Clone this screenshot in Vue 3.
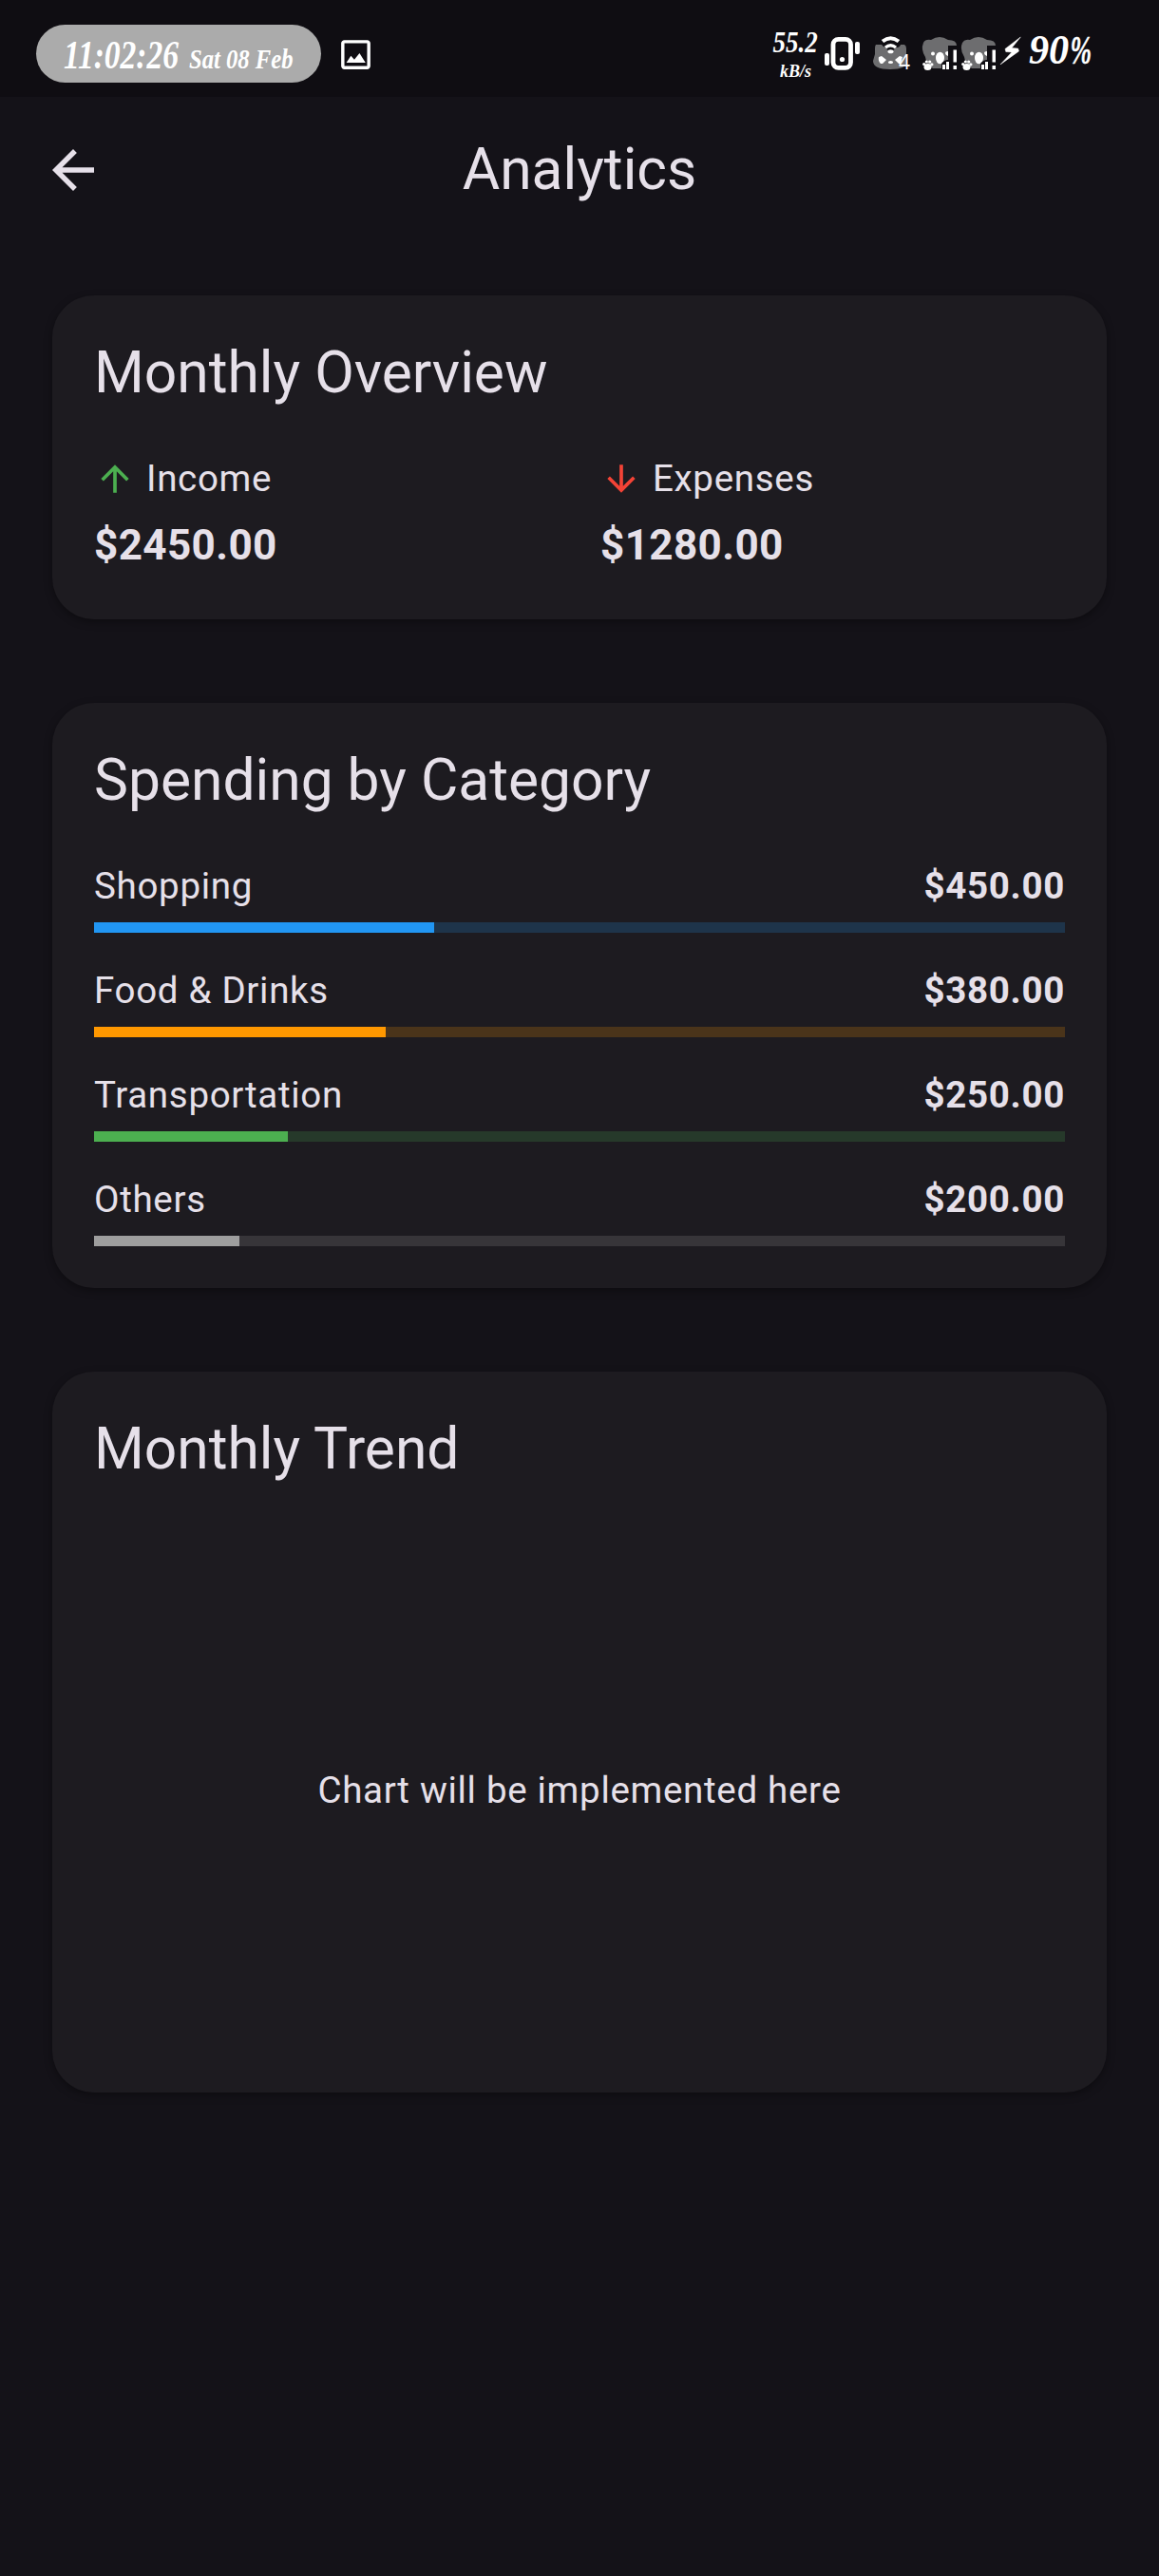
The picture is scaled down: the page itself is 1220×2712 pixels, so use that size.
<script setup>
const totals = [
  { label: 'Income', amount: '$2450.00', color: '#4caf50', icon: 'M4 12l1.41 1.41L11 7.83V20h2V7.83l5.58 5.59L20 12l-8-8-8 8z' },
  { label: 'Expenses', amount: '$1280.00', color: '#f44336', icon: 'M20 12l-1.41-1.41L13 16.17V4h-2v12.17l-5.58-5.59L4 12l8 8 8-8z' },
]

const categories = [
  { name: 'Shopping', amount: '$450.00', share: 35, color: '#2196f3', track: '#1e344a' },
  { name: 'Food & Drinks', amount: '$380.00', share: 30, color: '#ff9800', track: '#4a341a' },
  { name: 'Transportation', amount: '$250.00', share: 20, color: '#4caf50', track: '#26392a' },
  { name: 'Others', amount: '$200.00', share: 15, color: '#9e9e9e', track: '#373539' },
]

const signals = ['sim1', 'sim2']
</script>

<template>
  <div class="screen">
    <header class="status">
      <div class="pill">
        <svg width="300" height="61" viewBox="38 26 300 61">
          <text transform="translate(67 72) scale(.78 1)" font-size="43">11:02:26</text>
          <text transform="translate(199 71.500) scale(.85 1)" font-size="29">Sat 08 Feb</text>
        </svg>
      </div>
      <svg class="photo" width="41" height="41" viewBox="0 0 24 24" fill="#fff">
        <path d="M19 5v14H5V5h14m0-2H5c-1.1 0-2 .9-2 2v14c0 1.1.9 2 2 2h14c1.1 0 2-.9 2-2V5c0-1.1-.9-2-2-2z" />
        <path d="M6.2 17l2.8-4.3 2.1 2.4 3.2-4 3.7 5.9z" />
      </svg>
      <div class="indicators">
        <svg width="56" height="102" viewBox="810 0 56 102">
          <text transform="translate(813.500 55) scale(.87 1)" font-size="31">55.2</text>
          <text transform="translate(821 80.500) scale(.95 1)" font-size="19">kB/s</text>
        </svg>
        <svg width="50" height="102" viewBox="866 0 50 102" fill="#fff">
          <rect x="877" y="41.300" width="18.500" height="30" rx="5.500" fill="none" stroke="#fff" stroke-width="4.800" />
          <circle cx="886.500" cy="62.500" r="2.600" />
          <rect x="868" y="56" width="5" height="13" rx="2" />
          <rect x="900" y="44" width="5" height="13" rx="2" />
        </svg>
        <svg width="53" height="102" viewBox="916 0 53 102" fill="#fff">
          <path d="M922 47h6q2 3 5 3h11q3 0 4-3h4q2 1 2 4v6l1 7q0 9-18 9t-18-9l2-7v-6q0-3 1-4z" fill="#6d6d6f" />
          <g fill="none" stroke="#0f0d12" stroke-width="7">
            <path d="M930 45q7.500-6 15 0M933 51q4.500-4 9 0" />
          </g>
          <path d="M929 43.500q8.500-6.500 17 0" fill="none" stroke="#fff" stroke-width="4" />
          <path d="M932 50q5.500-4.500 11 0" fill="none" stroke="#fff" stroke-width="3.400" />
          <ellipse cx="937.500" cy="54.300" rx="3" ry="2" />
          <path d="M925 60l3-1 5 4-4 4h-2q-3-3-2-7zM950 60l-3-1-5 4 4 4h2z" />
          <ellipse cx="937.500" cy="65.500" rx="2.600" ry="1.600" />
          <text class="badge" x="946" y="72.500" font-size="21">4</text>
        </svg>
        <svg v-for="s in signals" :key="s" width="41" height="102" viewBox="969 0 41 102" fill="#fff">
          <path d="M972 45q2-4 8-3q9-6 18 0q9 0 9 6h-9v24h-16q-7-4-8-12q-5-8-2-15z" fill="#6d6d6f" />
          <circle cx="982" cy="56.500" r="2" />
          <path d="M998 54v5q-3-1-3-3t3-2z" />
          <ellipse cx="989.500" cy="61" rx="4.500" ry="6.300" />
          <g>
            <ellipse cx="976.500" cy="70.500" rx="4" ry="3.500" />
            <circle cx="972.700" cy="67.500" r="1.600" />
            <circle cx="975.300" cy="65" r="1.600" />
            <circle cx="978.700" cy="65" r="1.600" />
            <circle cx="980.900" cy="67.800" r="1.600" />
          </g>
          <path d="M991 73v-6q3-4 7-4v10z" fill="#0f0d12" />
          <path d="M992 68h3v5h-3zM996 65h3v8h-3z" />
          <path d="M1003.500 52.500h3.500v13h-3.500zM1003.500 69h3.500v4h-3.500z" />
        </svg>
        <svg width="31" height="102" viewBox="1051 0 31 102" fill="#fff">
          <path d="M1074.300 39L1058 51.500l.8 3 6.200.4-12 13 19.500-14-.8-2.800-6.700-.6z" stroke="#fff" stroke-width=".5" />
        </svg>
        <svg width="74" height="102" viewBox="1082 0 74 102">
          <text transform="translate(1083 67) scale(.96 1)" font-size="44">90</text>
          <text transform="translate(1126.500 67) scale(.63 1)" font-size="43" class="percent">%</text>
        </svg>
      </div>
    </header>

    <nav class="appbar">
      <svg width="66" height="66" viewBox="0 0 24 24" fill="#e6e0e9">
        <path d="M20 11H7.830l5.590-5.590L12 4l-8 8 8 8 1.410-1.410L7.830 13H20v-2z" />
      </svg>
      <h1>Analytics</h1>
    </nav>

    <main>
      <section class="card">
        <h2>Monthly Overview</h2>
        <div class="totals">
          <div v-for="t in totals" :key="t.label" class="total">
            <div class="label">
              <svg width="44" height="44" viewBox="0 0 24 24" :fill="t.color"><path :d="t.icon" /></svg>
              <span>{{ t.label }}</span>
            </div>
            <div class="amount">{{ t.amount }}</div>
          </div>
        </div>
      </section>

      <section class="card">
        <h2>Spending by Category</h2>
        <div class="categories">
          <div v-for="c in categories" :key="c.name">
            <div class="line">
              <span>{{ c.name }}</span>
              <b>{{ c.amount }}</b>
            </div>
            <div class="track" :style="{ background: c.track }">
              <div class="fill" :style="{ width: c.share + '%', background: c.color }"></div>
            </div>
          </div>
        </div>
      </section>

      <section class="card">
        <h2>Monthly Trend</h2>
        <div class="chart">Chart will be implemented here</div>
      </section>
    </main>
  </div>
</template>

<style>
body {
  margin: 0;
  background: #141218;
}
</style>

<style scoped>
.screen {
  width: 1220px;
  height: 2712px;
  background: #141218;
  color: #e6e0e9;
  font: 400 38.5px/55px Roboto, sans-serif;
  letter-spacing: 0.69px;
  overflow: hidden;
}
svg {
  display: block;
  flex: none;
}
.status {
  display: flex;
  align-items: center;
  height: 102px;
  padding: 0 64px 0 38px;
  box-sizing: border-box;
  background: #0f0d12;
  letter-spacing: 0;
}
.status text {
  font-family: "Liberation Serif", serif;
  font-weight: 700;
  font-style: italic;
  fill: #fff;
}
.status text.badge {
  font-family: "Open Sans", sans-serif;
  font-weight: 400;
  font-style: normal;
}
.status text.percent {
  stroke: #fff;
  stroke-width: 0.4px;
}
.pill {
  width: 300px;
  height: 61px;
  margin-top: 11px;
  border-radius: 31px;
  background: #ababab;
}
.photo {
  margin: 12px 0 0 16px;
}
.indicators {
  display: flex;
  margin-left: auto;
}
.appbar {
  display: grid;
  grid-template-columns: 66px 1fr 66px;
  align-items: center;
  height: 154px;
  padding: 0 44px;
}
h1,
h2 {
  margin: 0;
  font-size: 60.5px;
  font-weight: 400;
  line-height: 75px;
  padding-bottom: 2px;
  letter-spacing: 0;
}
h1 {
  text-align: center;
}
main {
  display: flex;
  flex-direction: column;
  gap: 88px;
  padding: 55px;
}
.card {
  padding: 44px;
  border-radius: 44px;
  background: #1d1b20;
  box-shadow: 0 3px 8px rgba(0, 0, 0, 0.35);
}
h2 {
  margin-bottom: 44px;
}
.totals {
  display: grid;
  grid-template-columns: 1fr 1fr;
  column-gap: 44px;
}
.label {
  display: flex;
  align-items: center;
  gap: 11px;
}
.amount {
  margin-top: 11px;
  padding-bottom: 2px;
  font-size: 44px;
  font-weight: 700;
  line-height: 64px;
  letter-spacing: 0.41px;
}
.totals {
  column-gap: 44px;
}
.categories {
  display: flex;
  flex-direction: column;
  gap: 33px;
}
.line {
  display: flex;
  justify-content: space-between;
}
.track {
  height: 11px;
  margin-top: 11px;
}
.fill {
  height: 100%;
}
.chart {
  display: flex;
  align-items: center;
  justify-content: center;
  height: 550px;
}
</style>
